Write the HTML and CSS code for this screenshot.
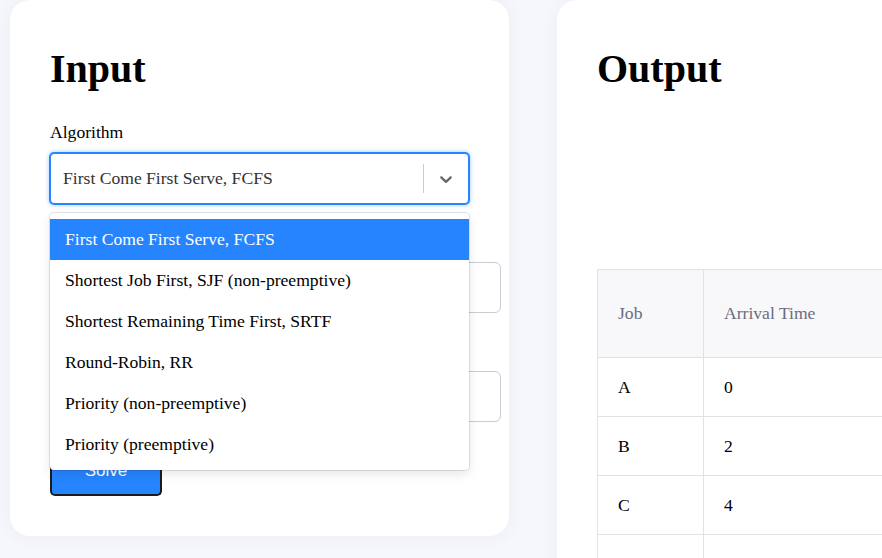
FILE: index.html
```html
<!DOCTYPE html>
<html lang="en">
<head>
<meta charset="utf-8">
<title>CPU Scheduling</title>
<link rel="stylesheet" href="styles.css">
</head>
<body>
<div class="page">
  <section class="card card-input">
    <h1 class="title">Input</h1>
    <div class="field">
      <label class="label">Algorithm</label>
      <div class="select">
        <div class="control">
          <div class="value">First Come First Serve, FCFS</div>
          <div class="indicators">
            <span class="separator"></span>
            <span class="indicator">
              <svg width="20" height="20" viewBox="0 0 20 20" aria-hidden="true"><path fill="#666" d="M4.516 7.548c0.436-0.446 1.043-0.481 1.576 0l3.908 3.747 3.908-3.747c0.533-0.481 1.141-0.446 1.574 0 0.436 0.445 0.408 1.197 0 1.615-0.406 0.418-4.695 4.502-4.695 4.502-0.217 0.223-0.502 0.335-0.787 0.335s-0.57-0.112-0.789-0.335c0 0-4.287-4.084-4.695-4.502s-0.436-1.170 0-1.615z"/></svg>
            </span>
          </div>
        </div>
        <div class="menu">
          <div class="option selected">First Come First Serve, FCFS</div>
          <div class="option">Shortest Job First, SJF (non-preemptive)</div>
          <div class="option">Shortest Remaining Time First, SRTF</div>
          <div class="option">Round-Robin, RR</div>
          <div class="option">Priority (non-preemptive)</div>
          <div class="option">Priority (preemptive)</div>
        </div>
      </div>
    </div>
    <div class="field">
      <label class="label">Arrival Times</label>
      <input class="text-input" type="text" value="">
    </div>
    <div class="field">
      <label class="label">Burst Times</label>
      <input class="text-input" type="text" value="">
    </div>
    <button class="solve" type="button">Solve</button>
  </section>
  <section class="card card-output">
    <h1 class="title">Output</h1>
    <div class="chart"></div>
    <table class="table">
      <thead>
        <tr><th class="col-job">Job</th><th class="col-arr">Arrival Time</th><th>Burst Time</th><th>Finish Time</th></tr>
      </thead>
      <tbody>
        <tr><td>A</td><td>0</td><td>3</td><td>3</td></tr>
        <tr><td>B</td><td>2</td><td>6</td><td>9</td></tr>
        <tr><td>C</td><td>4</td><td>4</td><td>13</td></tr>
        <tr><td>D</td><td>6</td><td>5</td><td>18</td></tr>
      </tbody>
    </table>
  </section>
</div>
</body>
</html>
```

FILE: styles.css
```css
html, body {
  margin: 0;
  padding: 0;
  overflow: hidden;
}
body {
  background: #f6f7fb;
  font-family: "Liberation Serif", "Times New Roman", serif;
  font-size: 17.6px;
  color: #000;
}
.page {
  display: flex;
  align-items: flex-start;
  gap: 48px;
  padding: 0 10px;
  width: 1400px;
}
.card {
  background: #fff;
  border-radius: 20px;
  box-shadow: 0 0 18px rgba(60, 80, 160, 0.06);
  box-sizing: border-box;
}
.card-input {
  width: 499px;
  padding: 46px 40px 40px;
}
.card-output {
  width: 700px;
  padding: 46px 40px 40px;
}
.title {
  margin: 0;
  font-size: 40px;
  line-height: 46px;
  font-weight: bold;
}
.field {
  margin-top: 27px;
}
.card-input .title + .field {
  margin-top: 30px;
}
.label {
  display: block;
  line-height: 20px;
  margin-bottom: 11px;
}
.select {
  position: relative;
}
.control {
  display: flex;
  align-items: center;
  height: 51px;
  box-sizing: border-box;
  border: 1px solid #2684ff;
  border-radius: 4px;
  box-shadow: 0 0 0 1px #2684ff, 0 0 4px 1px rgba(38, 132, 255, 0.45);
  background: #fff;
}
.value {
  flex: 1;
  padding-left: 12px;
  color: #333;
  line-height: 21px;
}
.indicators {
  display: flex;
  align-items: center;
  align-self: stretch;
}
.separator {
  width: 1px;
  height: 29px;
  background: #ccc;
}
.indicator {
  display: flex;
  padding: 0 12px;
}
.menu {
  position: absolute;
  top: 60px;
  left: 0;
  right: 0;
  background: #fff;
  border-radius: 4px;
  padding: 6px 0 5px;
  box-shadow: 0 0 0 1px rgba(0, 0, 0, 0.1), 0 4px 11px rgba(0, 0, 0, 0.1);
  z-index: 5;
}
.option {
  padding: 10px 15px;
  line-height: 21px;
}
.option.selected {
  background: #2684ff;
  color: #fff;
}
.text-input {
  display: block;
  width: 100%;
  box-sizing: content-box;
  height: 49px;
  padding: 0 15px;
  border: 1px solid #cbcbd4;
  border-radius: 6px;
  background: #fff;
  font: inherit;
}
.solve {
  display: block;
  margin-top: 24px;
  width: 112px;
  height: 50px;
  background: #2684ff;
  color: #fff;
  border: 2px solid #1c1c1c;
  border-top-color: #3a3a3a;
  border-radius: 5px;
  font-family: "Liberation Sans", Arial, sans-serif;
  font-size: 17px;
}
.chart {
  height: 177px;
}
.table {
  border-collapse: collapse;
  width: 640px;
}
.table th,
.table td {
  border: 1px solid #e2e2e4;
  text-align: left;
  padding: 18px 20px;
  line-height: 22px;
}
.table th {
  background: #f8f8fa;
  color: #6b6b7b;
  font-weight: normal;
  padding: 33px 20px;
  line-height: 21px;
}
.col-job {
  width: 65px;
}
.col-arr {
  width: 200px;
}
```
